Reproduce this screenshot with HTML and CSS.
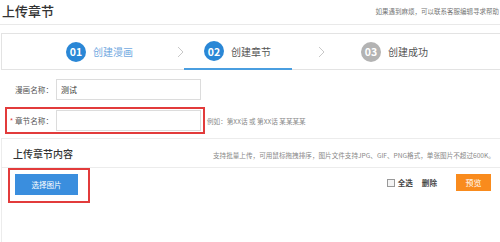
FILE: index.html
```html
<!DOCTYPE html>
<html lang="zh">
<head>
<meta charset="utf-8">
<link rel="stylesheet" href="styles.css">
</head>
<body>
<div class="page">
  <header class="top">
    <h1 class="title">上传章节</h1>
    <p class="help">如果遇到麻烦，可以联系客服编辑寻求帮助</p>
  </header>

  <nav class="steps">
    <div class="step done">
      <span class="num">01</span><span class="label">创建漫画</span>
    </div>
    <svg class="arrow a1" width="7" height="12" viewBox="0 0 7 12"><path d="M1 1l5 5-5 5" fill="none" stroke="#c8c8c8" stroke-width="1"/></svg>
    <div class="step current">
      <span class="num">02</span><span class="label">创建章节</span>
    </div>
    <svg class="arrow a2" width="7" height="12" viewBox="0 0 7 12"><path d="M1 1l5 5-5 5" fill="none" stroke="#c8c8c8" stroke-width="1"/></svg>
    <div class="step todo">
      <span class="num">03</span><span class="label">创建成功</span>
    </div>
  </nav>

  <form class="form">
    <div class="row">
      <div class="field">
        <label class="flabel">漫画名称：</label>
        <div class="input">测试</div>
      </div>
    </div>
    <div class="row">
      <div class="field marked">
        <label class="flabel"><span class="req">*</span> 章节名称：</label>
        <div class="input"></div>
      </div>
      <span class="example">例如：第XX话 或 第XX话 某某某某</span>
    </div>
  </form>

  <section class="upload">
    <div class="uphead">
      <h2 class="uptitle">上传章节内容</h2>
      <p class="updesc">支持批量上传，可用鼠标拖拽排序，图片文件支持JPG、GIF、PNG格式，单张图片不超过600K。</p>
    </div>
    <div class="upbar">
      <div class="pickwrap"><button type="button" class="pick">选择图片</button></div>
      <div class="tools">
        <span class="check"></span><span class="all">全选</span>
        <span class="del">删除</span>
        <button type="button" class="preview">预览</button>
      </div>
    </div>
  </section>
</div>
</body>
</html>
```

FILE: styles.css
```css
* { box-sizing: border-box; margin: 0; padding: 0; }
html, body { width: 500px; height: 242px; overflow: hidden; background: #fff; }
body { font-family: "Noto Sans CJK SC", "Noto Sans", sans-serif; color: #333; }
.page { width: 500px; height: 242px; overflow: hidden; }

.top {
  display: flex; justify-content: space-between; align-items: flex-start;
  height: 25px; border-bottom: 1px solid #e9e9e9; white-space: nowrap;
}
.title { font-size: 13px; font-weight: 500; color: #333; line-height: 14px; margin: 4px 0 0 2px; }
.help { font-size: 6.5px; color: #777; line-height: 8px; margin: 7px 1px 0 0; flex: none; }

.steps {
  display: flex; align-items: stretch;
  height: 37px; margin-top: 8px; margin-left: 1px; width: 520px;
  border: 1px solid #e3e3e3; border-right: none;
  padding-left: 64px;
}
.step { display: flex; align-items: center; gap: 7px; }
.num {
  width: 20px; height: 20px; border-radius: 50%;
  display: flex; align-items: center; justify-content: center;
  color: #fff; font-size: 10.5px; font-weight: bold; background: #2a87d6;
}
.label { font-size: 10px; color: #555; }
.done .label { color: #72a9df; }
.current { padding: 0 21px 0 20px; border-bottom: 2px solid #4a9ee0; margin-bottom: -1px; }
.todo .num { background: #b3b3b3; }
.arrow { align-self: center; flex: none; }
.a1 { margin-left: 44px; }
.a2 { margin-left: 26px; margin-right: 36px; }

.form { padding-left: 5px; margin-top: 6px; }
.row { display: flex; align-items: center; margin-bottom: 4px; }
.field {
  display: flex; align-items: center;
  width: 200px; border: 2px solid transparent; padding: 1px 2px 1px 0;
}
.field.marked { border-color: #e23b3b; }
.flabel { width: 49px; padding-right: 3px; text-align: right; font-size: 7.6px; color: #555; white-space: nowrap; }
.req { color: #e23b3b; }
.input {
  width: 145px; height: 21px; border: 1px solid #dcdcdc;
  font-size: 8px; color: #333; line-height: 19px; padding-left: 4px;
}
.example { font-size: 6.6px; color: #888; margin-left: 2px; white-space: nowrap; }

.upload {
  margin-top: 3px; margin-left: 1px; width: 520px; height: 120px;
  border: 1px solid #ececec; border-right: none;
}
.uphead {
  display: flex; align-items: center; height: 29px;
  border-bottom: 1px solid #ececec; white-space: nowrap;
}
.uptitle { font-size: 10px; font-weight: 500; color: #333; margin-left: 11px; width: 200px; }
.updesc { font-size: 6.6px; color: #888; margin-top: 3px; }

.upbar { display: flex; justify-content: space-between; align-items: flex-start; width: 499px; }
.pickwrap { margin-left: 6px; border: 2px solid #e23b3b; padding: 4px 10px 6px 5px; }
.pick {
  display: block; width: 63px; height: 21px; border: none; background: #3a8ede;
  color: #fff; font-family: inherit; font-size: 7.5px;
}
.tools { display: flex; align-items: center; margin-top: 6px; margin-right: 10px; }
.check { width: 8px; height: 8px; border: 1px solid #999; background: #f4f4f4; margin-right: 3px; }
.all, .del { font-size: 7.6px; color: #444; font-weight: bold; }
.del { margin-left: 9px; }
.preview {
  margin-left: 19px; width: 35px; height: 17px; border: none;
  background: #f98b1d; color: #fff; font-family: inherit; font-size: 8px;
}
```
